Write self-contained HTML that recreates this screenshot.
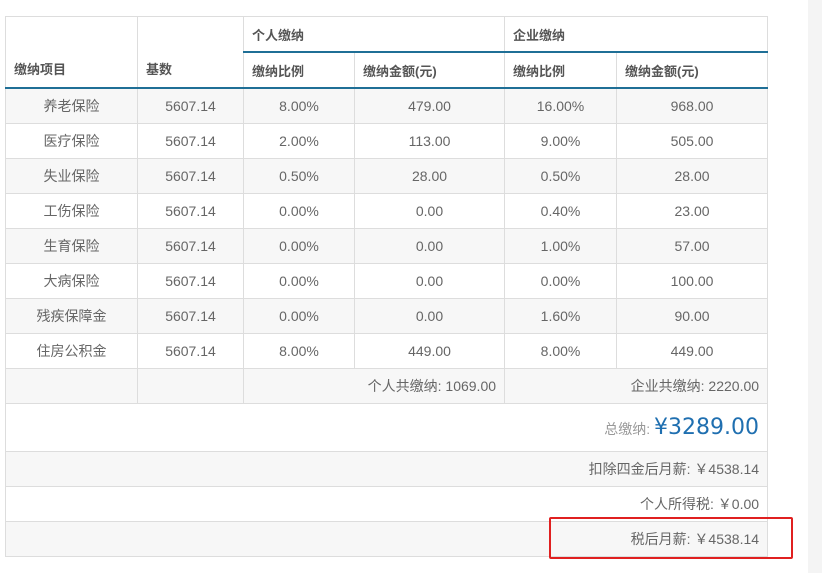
<!DOCTYPE html><html><head><meta charset="utf-8"><style>
body{margin:0;width:822px;height:573px;background:#fff;position:relative;overflow:hidden;font-family:"Liberation Sans","Noto Sans CJK SC",sans-serif;color:#666;font-size:14px}
.strip{position:absolute;left:808px;top:0;width:14px;height:573px;background:#f4f4f4}
table{position:absolute;left:5px;top:16px;border-collapse:collapse;table-layout:fixed;width:762px}
td,th{border:1px solid #ddd;padding:0 8px;height:34px}
th{font-weight:bold;text-align:left;color:#555;font-size:13px}
td{text-align:center}
.g{background:#f7f7f7}
.r{text-align:right}
.bb{border-bottom:2px solid #1f6f96}
.red{position:absolute;left:549px;top:517px;width:240px;height:38px;border:2px solid #e02020;border-radius:2px}
</style></head><body><div class="strip"></div>
<table>
<colgroup><col style="width:132px"><col style="width:106px"><col style="width:111px"><col style="width:150px"><col style="width:112px"><col style="width:151px"></colgroup>
<tr><th rowspan="2" class="bb" style="vertical-align:bottom;padding-bottom:9px">缴纳项目</th><th rowspan="2" class="bb" style="vertical-align:bottom;padding-bottom:9px">基数</th><th colspan="2" class="bb">个人缴纳</th><th colspan="2" class="bb">企业缴纳</th></tr>
<tr><th class="bb">缴纳比例</th><th class="bb">缴纳金额(元)</th><th class="bb">缴纳比例</th><th class="bb">缴纳金额(元)</th></tr>
<tr class="g"><td>养老保险</td><td>5607.14</td><td>8.00%</td><td>479.00</td><td>16.00%</td><td>968.00</td></tr>
<tr><td>医疗保险</td><td>5607.14</td><td>2.00%</td><td>113.00</td><td>9.00%</td><td>505.00</td></tr>
<tr class="g"><td>失业保险</td><td>5607.14</td><td>0.50%</td><td>28.00</td><td>0.50%</td><td>28.00</td></tr>
<tr><td>工伤保险</td><td>5607.14</td><td>0.00%</td><td>0.00</td><td>0.40%</td><td>23.00</td></tr>
<tr class="g"><td>生育保险</td><td>5607.14</td><td>0.00%</td><td>0.00</td><td>1.00%</td><td>57.00</td></tr>
<tr><td>大病保险</td><td>5607.14</td><td>0.00%</td><td>0.00</td><td>0.00%</td><td>100.00</td></tr>
<tr class="g"><td>残疾保障金</td><td>5607.14</td><td>0.00%</td><td>0.00</td><td>1.60%</td><td>90.00</td></tr>
<tr><td>住房公积金</td><td>5607.14</td><td>8.00%</td><td>449.00</td><td>8.00%</td><td>449.00</td></tr>
<tr class="g"><td></td><td></td><td colspan="2" class="r">个人共缴纳: 1069.00</td><td colspan="2" class="r">企业共缴纳: 2220.00</td></tr>
<tr><td colspan="6" class="r" style="height:47px"><span style="color:#999">总缴纳:</span> <span style="color:#1f6fb0;font-size:22px;font-family:'DejaVu Sans',sans-serif">¥3289.00</span></td></tr>
<tr class="g"><td colspan="6" class="r">扣除四金后月薪: ￥4538.14</td></tr>
<tr><td colspan="6" class="r">个人所得税: ￥0.00</td></tr>
<tr class="g"><td colspan="6" class="r">税后月薪: ￥4538.14</td></tr>
</table><div class="red"></div></body></html>
